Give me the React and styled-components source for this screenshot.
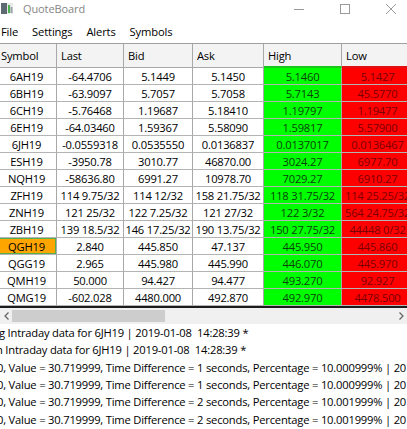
import React from 'react';
import styled, { createGlobalStyle, css } from 'styled-components';

const GlobalStyle = createGlobalStyle`
  html, body {
    margin: 0;
    padding: 0;
    background: #fff;
  }
  body {
    font-family: "Segoe UI", "Open Sans", "Noto Sans", sans-serif;
    color: #000;
  }
`

const COLS = '60px 67px 69px 71px 78px 72px'

const rows = [
  ['6AH19', '-64.4706', '5.1449', '5.1450', '5.1460', '5.1427'],
  ['6BH19', '-63.9097', '5.7057', '5.7058', '5.7143', '45.5770'],
  ['6CH19', '-5.76468', '1.19687', '5.18410', '1.19797', '1.19477'],
  ['6EH19', '-64.03460', '1.59367', '5.58090', '1.59817', '5.57900'],
  ['6JH19', '-0.0559318', '0.0535550', '0.0136837', '0.0137017', '0.0136467'],
  ['ESH19', '-3950.78', '3010.77', '46870.00', '3024.27', '6977.70'],
  ['NQH19', '-58636.80', '6991.27', '10978.70', '7029.27', '6910.27'],
  ['ZFH19', '114 9.75/32', '114 12/32', '158 21.75/32', '118 31.75/32', '114 25.25/32'],
  ['ZNH19', '121 25/32', '122 7.25/32', '121 27/32', '122 3/32', '564 24.75/32'],
  ['ZBH19', '139 18.5/32', '146 17.25/32', '190 13.75/32', '150 27.75/32', '44448 0/32'],
  ['QGH19', '2.840', '445.850', '47.137', '445.950', '445.860', true],
  ['QGG19', '2.965', '445.980', '445.990', '446.070', '445.970'],
  ['QMH19', '50.000', '94.427', '94.477', '493.270', '92.927'],
  ['QMG19', '-602.028', '4480.000', '492.870', '492.970', '4478.500'],
]

const logLines = [
  { shift: -1, text: 'g Intraday data for 6JH19 | 2019-01-08  14:28:39 *' },
  { shift: -4, text: 'n Intraday data for 6JH19 | 2019-01-08  14:28:39 *' },
  { shift: -3, text: '0, Value = 30.719999, Time Difference = 1 seconds, Percentage = 10.000999% | 2019-01-08  14:28:40' },
  { shift: -3, text: '0, Value = 30.719999, Time Difference = 1 seconds, Percentage = 10.000999% | 2019-01-08  14:28:40' },
  { shift: -3, text: '0, Value = 30.719999, Time Difference = 2 seconds, Percentage = 10.001999% | 2019-01-08  14:28:41' },
  { shift: -3, text: '0, Value = 30.719999, Time Difference = 2 seconds, Percentage = 10.001999% | 2019-01-08  14:28:41' },
]

// Window chrome
const Window = styled.div`
  width: 407px;
  height: 429px;
  overflow: hidden;
  display: flex;
  flex-direction: column;
  background: #fff;
`

const TitleBar = styled.div`
  height: 17px;
  flex-shrink: 0;
  display: flex;
  align-items: center;
  padding-left: 1px;
`

const AppTitle = styled.span`
  margin-left: 10px;
  font-size: 11px;
  letter-spacing: -0.1px;
  color: #858585;
`

const WindowButtons = styled.div`
  margin-left: auto;
  margin-right: -7px;
  display: flex;
`

const WinButton = styled.div`
  width: 46px;
  height: 17px;
  display: flex;
  align-items: center;
  justify-content: center;
`

const MenuBar = styled.div`
  height: 23px;
  padding-top: 3px;
  flex-shrink: 0;
  display: flex;
  align-items: center;
  gap: 14px;
  padding-left: 1px;
  font-size: 11.2px;
  letter-spacing: -0.15px;
`

const MenuItem = styled.span`
  color: #000;
`
// ====

// Table
const TableViewport = styled.div`
  flex-shrink: 0;
  overflow: hidden;
  border-top: 1px solid #a0a0a0;
  border-bottom: 2px solid #1c1c1c;
`

const Grid = styled.div`
  display: grid;
  grid-template-columns: ${COLS};
  width: max-content;
  margin-left: -3px;
  font-size: 11.2px;
  letter-spacing: -0.2px;
`

const HeadCell = styled.div`
  height: 24px;
  box-sizing: border-box;
  padding-left: 4px;
  display: flex;
  align-items: center;
  background: #f3f3f3;
  border-right: 1px solid #a8a8a8;
  border-bottom: 1px solid #a8a8a8;
  ${p => p.$accent && css`
    border-bottom: 2px solid ${p.$accent};
  `}
`

const Cell = styled.div`
  height: 17px;
  box-sizing: border-box;
  display: flex;
  align-items: center;
  justify-content: center;
  white-space: nowrap;
  background: ${p => p.$bg || '#fff'};
  color: ${p => p.$fg || '#000'};
  border-right: 1px solid #a8a8a8;
  border-bottom: 1px solid #b4b4b4;
  ${p => p.$current && css`
    box-shadow: inset 0 0 0 1px #55b04a;
  `}
`

const HScroll = styled.div`
  height: 16px;
  flex-shrink: 0;
  display: flex;
  align-items: center;
  background: #f0f0f0;
`

const Arrow = styled.div`
  width: 12px;
  height: 16px;
  display: flex;
  align-items: center;
  justify-content: center;
`

const Track = styled.div`
  flex: 1;
  height: 12px;
  display: flex;
`

const Thumb = styled.div`
  width: 153px;
  background: #cdcdcd;
`
// ====

// Log
const Log = styled.div`
  flex: 1;
  overflow: hidden;
  font-size: 11.2px;
  letter-spacing: -0.2px;
  line-height: 17.35px;
`

const LogLine = styled.div`
  white-space: pre;
  margin-left: ${p => p.$shift}px;
`
// ====

const AppIcon = () => (
  <svg width="12" height="11" viewBox="0 0 12 11">
    <rect x="0" y="0" width="12" height="11" fill="#e8e8e8" />
    <rect x="0" y="0" width="6" height="11" fill="#5d6a72" />
    <rect x="7" y="2" width="2" height="8" fill="#4caf50" />
    <rect x="9.5" y="4" width="2" height="6" fill="#9aa3a8" />
  </svg>
)

const headers = [
  { label: 'Symbol' },
  { label: 'Last' },
  { label: 'Bid' },
  { label: 'Ask' },
  { label: 'High', accent: '#18c818' },
  { label: 'Low', accent: '#e01010' },
]

const App = () => {
  return (
    <Window>
      <GlobalStyle />
      <TitleBar>
        <AppIcon />
        <AppTitle>QuoteBoard</AppTitle>
        <WindowButtons>
          <WinButton>
            <svg width="10" height="10" viewBox="0 0 10 10">
              <line x1="0" y1="5.5" x2="10" y2="5.5" stroke="#9a9a9a" strokeWidth="1" />
            </svg>
          </WinButton>
          <WinButton>
            <svg width="10" height="10" viewBox="0 0 10 10">
              <rect x="0.5" y="0.5" width="9" height="9" fill="none" stroke="#9a9a9a" strokeWidth="1" />
            </svg>
          </WinButton>
          <WinButton>
            <svg width="10" height="10" viewBox="0 0 10 10">
              <path d="M0 0 L10 10 M10 0 L0 10" stroke="#9a9a9a" strokeWidth="1" />
            </svg>
          </WinButton>
        </WindowButtons>
      </TitleBar>

      <MenuBar>
        <MenuItem>File</MenuItem>
        <MenuItem>Settings</MenuItem>
        <MenuItem>Alerts</MenuItem>
        <MenuItem>Symbols</MenuItem>
      </MenuBar>

      <TableViewport>
        <Grid>
          {headers.map(h => (
            <HeadCell key={h.label} $accent={h.accent}>{h.label}</HeadCell>
          ))}
          {rows.map(r => (
            <React.Fragment key={r[0]}>
              <Cell $bg={r[6] ? '#ffa500' : undefined} $current={r[6]}>{r[0]}</Cell>
              <Cell>{r[1]}</Cell>
              <Cell>{r[2]}</Cell>
              <Cell>{r[3]}</Cell>
              <Cell $bg="#00ff00" $fg="#0b3f0b">{r[4]}</Cell>
              <Cell $bg="#ff0000" $fg="#7a0000">{r[5]}</Cell>
            </React.Fragment>
          ))}
        </Grid>
      </TableViewport>

      <HScroll>
        <Arrow>
          <svg width="5" height="8" viewBox="0 0 5 8">
            <path d="M4.5 0.5 L1 4 L4.5 7.5" fill="none" stroke="#606060" strokeWidth="1.2" />
          </svg>
        </Arrow>
        <Track>
          <Thumb />
        </Track>
        <Arrow>
          <svg width="5" height="8" viewBox="0 0 5 8">
            <path d="M0.5 0.5 L4 4 L0.5 7.5" fill="none" stroke="#606060" strokeWidth="1.2" />
          </svg>
        </Arrow>
      </HScroll>

      <Log>
        {logLines.map((l, i) => (
          <LogLine key={i} $shift={l.shift}>{l.text}</LogLine>
        ))}
      </Log>
    </Window>
  );
};

export default App;
